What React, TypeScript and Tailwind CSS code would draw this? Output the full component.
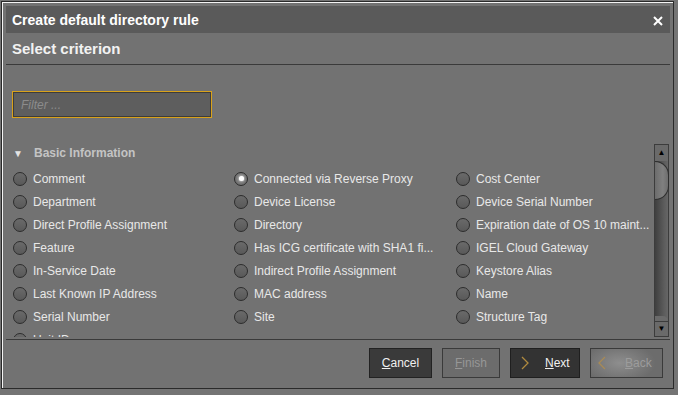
import { useState } from "react";

const columns: string[][] = [
  ["Comment", "Department", "Direct Profile Assignment", "Feature", "In-Service Date", "Last Known IP Address", "Serial Number", "Unit ID"],
  ["Connected via Reverse Proxy", "Device License", "Directory", "Has ICG certificate with SHA1 fi...", "Indirect Profile Assignment", "MAC address", "Site", ""],
  ["Cost Center", "Device Serial Number", "Expiration date of OS 10 maint...", "IGEL Cloud Gateway", "Keystore Alias", "Name", "Structure Tag", ""],
];

function Radio({ checked }: { checked: boolean }) {
  return (
    <span
      className={`flex h-[14px] w-[14px] shrink-0 items-center justify-center rounded-full border border-[#2c2c2c] ${
        checked
          ? "bg-[radial-gradient(circle_at_50%_45%,#9a9a9a,#5c5c5c)]"
          : "bg-[linear-gradient(to_bottom,#6a6a6a,#595959)]"
      }`}
    >
      {checked && <span className="h-[5px] w-[5px] rounded-full bg-white shadow-[0_0_2px_#fff]" />}
    </span>
  );
}

export default function App() {
  const [selected, setSelected] = useState("Connected via Reverse Proxy");

  const rows = columns[0].map((_, i) => columns.map((col) => col[i]));

  return (
    <div className="h-[395px] w-[678px] overflow-hidden bg-[#747474] pl-[1px] pt-[1px] font-['Liberation_Sans',Arial,sans-serif] text-[12px] text-[#e8e8e8]">
      <div className="flex h-[388px] w-[673px] flex-col border border-[#2a2a2a] bg-[#727272] pb-[4px] pl-[4px] pr-[3px] pt-[4px] shadow-[inset_1px_1px_0_#f4f4f4]">
        {/* title bar */}
        <div className="flex h-[27px] items-center justify-between bg-[#5a5a5a] pl-[6px] pr-[7px] pt-[2px]">
          <span className="text-[14px] font-bold text-white">Create default directory rule</span>
          <svg width="10" height="10" viewBox="0 0 10 10">
            <path d="M1 1 L9 9 M9 1 L1 9" stroke="#fff" strokeWidth="2" />
          </svg>
        </div>

        <div className="flex h-[32px] items-center border-b border-[#3a3a3a] pl-[6px] pt-[1px]">
          <span className="text-[15px] font-bold text-[#f2f2f2]">Select criterion</span>
        </div>

        <div className="pl-[6px] pt-[26px]">
          <div className="h-[27px] w-[200px] border border-[#d9a21a]">
            <div className="flex h-full items-center border border-[#3c3c3c] bg-[#5e5e5e] pl-[7px] italic text-[#8c8c8c]">
              Filter ...
            </div>
          </div>
        </div>

        {/* list */}
        <div className="mt-[26px] flex h-[193px]">
          <div className="flex-1 overflow-hidden pl-[7px]">
            <div className="flex h-[18px] items-center">
              <span className="w-[21px] text-[10px] text-[#e4e4e4]">▼</span>
              <span className="font-bold text-[#c4c4c4]">Basic Information</span>
            </div>
            <div className="mt-[5px]">
              {rows.map((row, i) => (
                <div key={i} className="grid h-[23px] grid-cols-[221px_222px_1fr] items-center">
                  {row.map((label, j) =>
                    label ? (
                      <button
                        key={j}
                        onClick={() => setSelected(label)}
                        className="flex items-center gap-[6px] text-left"
                      >
                        <Radio checked={selected === label} />
                        <span className="whitespace-nowrap">{label}</span>
                      </button>
                    ) : (
                      <span key={j} />
                    )
                  )}
                </div>
              ))}
            </div>
          </div>

          {/* scrollbar */}
          <div className="mr-[1px] flex w-[15px] flex-col border border-[#3c3c3c] bg-[#6a6a6a]">
            <div className="flex h-[16px] items-center justify-center text-[8px] text-black">▲</div>
            <div className="relative flex-1 bg-[linear-gradient(to_right,#3f3f3f,#5c5c5c_70%,#666)]">
              <div className="absolute left-0 top-0 h-[39px] w-[14px] rounded-r-full border border-l-0 border-[#2e2e2e] bg-[linear-gradient(to_right,#6c6c6c,#808080_60%,#6e6e6e)]" />
              <div className="absolute bottom-0 left-0 h-[5px] w-full rounded-tr-full bg-[#6a6a6a]" />
            </div>
            <div className="flex h-[15px] items-center justify-center border-t border-[#3c3c3c] text-[8px] text-black">▼</div>
          </div>
        </div>

        <div className="mt-[2px] border-t border-[#3a3a3a]" />

        {/* buttons */}
        <div className="mt-[8px] flex justify-end gap-[10px] pr-[7px]">
          <button className="flex h-[30px] w-[63px] items-center justify-center border border-[#222] bg-[#3a3a3a] text-[#f0f0f0]">
            <span>
              <span className="underline">C</span>ancel
            </span>
          </button>
          <button className="flex h-[30px] w-[58px] items-center justify-center border border-[#3a3a3a] bg-[#6c6c6c] text-[#979797]">
            <span>
              <span className="underline">F</span>inish
            </span>
          </button>
          <button className="flex h-[30px] w-[70px] items-center border border-[#1f1f1f] bg-[#333] pl-[10px] text-[#f0f0f0]">
            <svg width="8" height="14" viewBox="0 0 8 14">
              <path d="M1 1 L7 7 L1 13" stroke="#b08a3e" strokeWidth="1.3" fill="none" />
            </svg>
            <span className="ml-[16px]">
              <span className="underline">N</span>ext
            </span>
          </button>
          <button className="flex h-[30px] w-[73px] items-center border border-[#3a3a3a] bg-[radial-gradient(ellipse_36px_20px_at_40%_50%,#8e8e8e,#6c6c6c)] pl-[7px] text-[#9c9c9c]">
            <svg width="8" height="14" viewBox="0 0 8 14">
              <path d="M7 1 L1 7 L7 13" stroke="#a88a55" strokeWidth="1.3" fill="none" />
            </svg>
            <span className="ml-[19px]">
              <span className="underline">B</span>ack
            </span>
          </button>
        </div>
      </div>
    </div>
  );
}
